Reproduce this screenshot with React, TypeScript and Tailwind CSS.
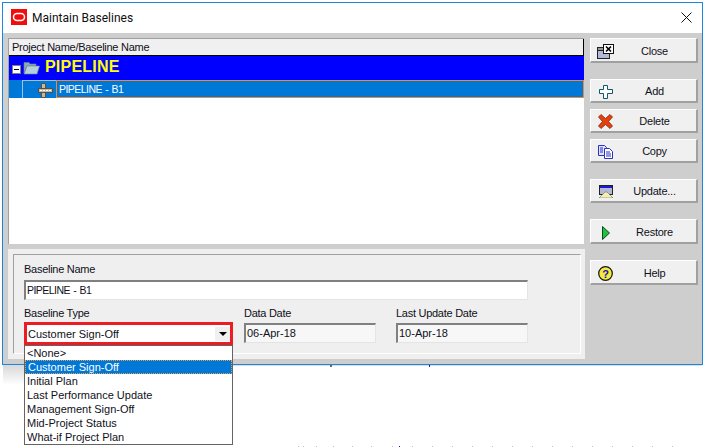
import React from "react";

const Btn = ({ label, icon, mt, h = "h-[24px] pt-[2px]" }: { label: string; icon: React.ReactNode; mt: string; h?: string }) => (
  <div className={`${mt} ${h} w-[108px] bg-[#f0f0f0] border-t border-l border-t-white border-l-white border-b-2 border-r-2 border-b-[#a0a0a0] border-r-[#a0a0a0] flex items-center`}>
    <div className="w-[28px] flex justify-center pl-[1px]">{icon}</div>
    <div className="flex-1 text-center pr-[6px] text-[11px] tracking-[-0.25px] text-[#101020]">{label}</div>
  </div>
);

const CloseIcon = () => (
  <svg width="17" height="15" viewBox="0 0 17 15"><rect x="0.5" y="3.500" width="12" height="11" fill="#b4b8d8" stroke="#222" /><rect x="0.5" y="3.500" width="12" height="3" fill="#9a9a9a" stroke="#222" /><rect x="6.500" y="0.500" width="10" height="9" fill="#fff" stroke="#111" /><path d="M9 2.500l5 5m0-5l-5 5" stroke="#000" strokeWidth="1.600" /></svg>
);
const AddIcon = () => (
  <svg width="14" height="14" viewBox="0 0 14 14"><path d="M4.500 .5h4v4h5v4h-5v5h-4v-5h-4v-4h4z" fill="#fff" stroke="#0d5a70" /></svg>
);
const DeleteIcon = () => (
  <svg width="15" height="15" viewBox="0 0 15 15"><path d="M.5 3l2.500-2.500 4.500 4 4.500-4 2.500 2.500-4 4.500 4 4.500-2.500 2.500-4.500-4-4.500 4-2.500-2.500 4-4.500z" fill="#e8400c" stroke="#7a2a10" strokeWidth=".8" /></svg>
);
const CopyIcon = () => (
  <svg width="15" height="14" viewBox="0 0 15 14"><path d="M.5.5h6l2 2v8h-8z" fill="#dfe4ff" stroke="#2a30c0" /><path d="M6.500 3.500h5l3 3v7h-8z" fill="#fff" stroke="#2a30c0" /><path d="M8 7h4M8 9h5M8 11h5M2 3h3M2 5h3M2 7h3" stroke="#2a30c0" /></svg>
);
const UpdateIcon = () => (
  <svg width="14" height="13" viewBox="0 0 14 13"><rect x=".5" y=".5" width="13" height="9" fill="#b4b8d8" stroke="#222" /><rect x="1" y="1" width="12" height="2" fill="#1a1ad0" /><path d="M0 13l6-6h2l6 6z" fill="#f5eeb0" stroke="#555" strokeWidth=".5" /></svg>
);
const RestoreIcon = () => (
  <svg width="8" height="14" viewBox="0 0 8 14"><path d="M.5.500l7 6.500-7 6.500z" fill="#22c040" stroke="#0a4a20" /></svg>
);
const HelpIcon = () => (
  <svg width="15" height="15" viewBox="0 0 15 15"><circle cx="7.500" cy="7.500" r="6.800" fill="#f4ea3c" stroke="#111" strokeWidth="1.200" /><text x="7.500" y="11.500" textAnchor="middle" fontSize="11" fontWeight="700" fill="#1010c0" fontFamily="Liberation Sans">?</text></svg>
);
const FolderIcon = () => (
  <svg width="17" height="14" viewBox="0 0 17 14"><path d="M1 3V1.500h5l1 1.500h6v2H4L1 12z" fill="#8fa8b8" stroke="#6b8494" strokeWidth=".6" /><path d="M1 13l3-8h12.500l-2.500 8z" fill="#b4d0dc" stroke="#6b8494" strokeWidth=".6" /></svg>
);
const BaselineIcon = () => (
  <svg width="15" height="15" viewBox="0 0 15 15"><path d="M3.500.5h4v5h-4zM3.500 9.500h4v5h-4z" fill="#c8b898" stroke="#55504a" /><rect x=".5" y="5.500" width="14" height="4" fill="#c8b898" stroke="#55504a" /><path d="M2 7.500h11" stroke="#fff" strokeDasharray="2 1" /></svg>
);

const Sunken = ({ children, bg, w, size = "text-[11px]" }: { children: React.ReactNode; bg: string; w: string; size?: string }) => (
  <div className={`${w} ${bg} ${size} h-[20px] border-t-2 border-l-2 border-t-[#808080] border-l-[#808080] border-b border-r border-b-[#e4e4e4] border-r-[#e4e4e4] pl-[1px] leading-[17px] text-[#101020]`}>{children}</div>
);

const items = ["Initial Plan", "Last Performance Update", "Management Sign-Off", "Mid-Project Status", "What-if Project Plan"];
const dots = [298, 303, 316, 333, 352, 371, 392, 399, 412, 432, 452, 472, 492, 512, 532, 552, 572, 592, 612, 632, 652, 672];

export default function App() {
  return (
    <div className="relative w-[705px] h-[448px] bg-white overflow-hidden font-['Liberation_Sans',Arial,sans-serif]">
      <div className="pt-[2px] pl-[2px]">
        <div className="w-[701px] h-[363px] border border-[#1a86dc] bg-[#cecece] flex flex-col">
          <div className="h-[30px] shrink-0 bg-white flex items-center pl-[8px] pr-[10px] pb-[2px]">
            <svg width="16" height="16" viewBox="0 0 16 16"><rect width="16" height="16" fill="#f00d0d" /><rect x="2.500" y="4.500" width="11" height="7" rx="3.500" fill="none" stroke="#fff" strokeWidth="1.500" /></svg>
            <span className="ml-[5px] mt-[2px] text-[12px] text-[#101010] font-['Roboto',sans-serif]">Maintain Baselines</span>
            <svg className="ml-auto" width="11" height="11" viewBox="0 0 11 11"><path d="M.5.500l10 10m0-10l-10 10" stroke="#111" strokeWidth="1" /></svg>
          </div>
          <div className="flex flex-1 pt-[5px] pl-[5px]">
            <div className="w-[577px] flex flex-col">
              <div className="w-[576px] h-[206px] bg-white border-t border-l border-[#a0a0a0] flex flex-col">
                <div className="h-[17px] bg-[#f0f0f0] border-b border-b-black border-r border-r-black pl-[3px] text-[11px] tracking-[-0.27px] leading-[16px] text-[#101020]">Project Name/Baseline Name</div>
                <div className="h-[24px] bg-[#0000ff] flex items-center pl-[3px]">
                  <div className="w-[9px] h-[9px] bg-white border border-[#808080] flex items-center justify-center mt-[3px]"><div className="w-[5px] h-[1px] bg-black" /></div>
                  <div className="ml-[2px]"><FolderIcon /></div>
                  <span className="ml-[5px] mb-[2px] text-[16px] tracking-[0.2px] font-bold text-[#ffff00]">PIPELINE</span>
                </div>
                <div className="h-[18px] bg-[#0078d7] flex">
                  <div className="ml-[13px] w-[34px] border-l border-t border-[#9cc4e4] flex items-center justify-end pr-[3px] pt-[1px]"><BaselineIcon /></div>
                  <div className="flex-1 border border-[#f08a30] pl-[2px] text-[10.500px] tracking-[-0.55px] [word-spacing:1px] leading-[17px] text-white">PIPELINE - B1</div>
                </div>
              </div>
              <div className="mt-[5px] h-[110px] bg-[#efefef] pt-[5px] pl-[5px]">
                <div className="w-[568px] h-[100px] border-t border-t-[#a0a0a0] border-l border-l-[#a0a0a0] border-r border-r-white border-b border-b-white px-[10px] pt-[8px] text-[11px] tracking-[-0.27px] text-[#101020]">
                  <div className="leading-[13px]">Baseline Name</div>
                  <div className="mt-[4px]"><Sunken w="w-[504px]" bg="bg-white" size="text-[10.500px] tracking-[-0.55px] [word-spacing:1px]">PIPELINE - B1</Sunken></div>
                  <div className="flex mt-[7px]">
                    <div className="w-[220px]">
                      <div className="leading-[13px]">Baseline Type</div>
                      <div className="mt-[2px] w-[209px] h-[23px] border-[3px] border-[#ed1c24] bg-white flex items-center pl-[1px] text-[11px] tracking-normal">
                        <span className="pt-[1px]">Customer Sign-Off</span>
                        <div className="ml-auto w-[15px] h-[14px] bg-[#f0f0f0] flex items-center justify-center">
                          <div className="w-0 h-0 border-l-[4px] border-r-[4px] border-t-[4px] border-l-transparent border-r-transparent border-t-black" />
                        </div>
                      </div>
                    </div>
                    <div className="w-[152px]">
                      <div className="leading-[13px]">Data Date</div>
                      <div className="mt-[3px]"><Sunken w="w-[132px]" bg="bg-[#f7f7f7]" size="text-[11px] tracking-normal">06-Apr-18</Sunken></div>
                    </div>
                    <div>
                      <div className="leading-[13px]">Last Update Date</div>
                      <div className="mt-[3px]"><Sunken w="w-[132px]" bg="bg-[#f7f7f7]" size="text-[11px] tracking-normal">10-Apr-18</Sunken></div>
                    </div>
                  </div>
                </div>
              </div>
            </div>
            <div className="ml-[5px] flex flex-col">
              <Btn mt="mt-0" h="h-[25px] pt-[3px]" label="Close" icon={<CloseIcon />} />
              <Btn mt="mt-[16px]" label="Add" icon={<AddIcon />} />
              <Btn mt="mt-[6px]" label="Delete" icon={<DeleteIcon />} />
              <Btn mt="mt-[6px]" label="Copy" icon={<CopyIcon />} />
              <Btn mt="mt-[16px]" label="Update..." icon={<UpdateIcon />} />
              <Btn mt="mt-[16px]" h="h-[25px] pt-[3px]" label="Restore" icon={<RestoreIcon />} />
              <Btn mt="mt-[16px]" h="h-[25px] pt-[3px]" label="Help" icon={<HelpIcon />} />
            </div>
          </div>
        </div>
      </div>
      <div className="absolute left-[3px] top-[365px] w-[699px] h-[1px] bg-[#dcdcdc]" />
      <div className="absolute left-[3px] top-[365px] w-[22px] h-[20px] bg-gradient-to-b from-[#d8d8d8] to-white" />
      <div className="absolute left-[330px] top-[365px] w-[2px] h-[2px] bg-[#666]" />
      <div className="absolute left-[429px] top-[365px] w-[1px] h-[2px] bg-[#1010c0]" />
      {dots.map((x) => (
        <div key={x} className={`absolute top-[446px] w-[1px] h-[1px] ${x === 399 ? "bg-[#1010c0]" : "bg-[#c0c0c0]"}`} style={{ left: x }} />
      ))}
      <div className="absolute left-[24px] top-[345px] w-[209px] h-[100px] bg-white border border-[#646464] text-[11px] leading-[14px] text-[#101020]">
        <div className="pl-[2px]">&lt;None&gt;</div>
        <div className="pl-[2px] bg-[#0078d7] text-white border border-dotted border-[#e8a050] h-[14px] leading-[12px]">Customer Sign-Off</div>
        {items.map((t) => (
          <div key={t} className="pl-[2px]">{t}</div>
        ))}
      </div>
    </div>
  );
}
